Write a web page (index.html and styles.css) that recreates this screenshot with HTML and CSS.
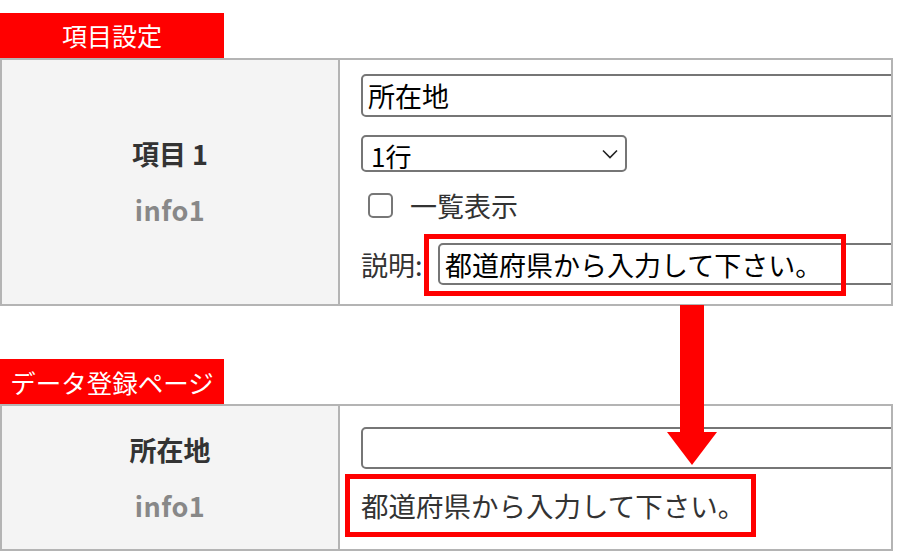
FILE: index.html
```html
<!DOCTYPE html>
<html lang="ja">
<head>
    <meta charset="UTF-8"/>
    <meta name="viewport" content="width=device-width, initial-scale=1"/>
    <title>項目設定とデータ登録ページ</title>
    <link rel="stylesheet" href="styles.css">
</head>
<body>

<div class="tab">項目設定</div>
<div class="panel">
    <div class="head">
        <p class="head-name">項目 1</p>
        <p class="head-key">info1</p>
    </div>
    <div class="body body-setting">
        <input class="field" type="text" value="所在地">
        <div class="select-wrap">
            <select class="select">
                <option>1行</option>
            </select>
            <svg class="chevron" width="16" height="10" viewBox="0 0 16 10">
                <path d="M1 1.5 L8 8.5 L15 1.5" fill="none" stroke="#222" stroke-width="1.6"/>
            </svg>
        </div>
        <label class="check-row">
            <input class="check" type="checkbox">
            <span>一覧表示</span>
        </label>
        <div class="desc-row">
            <span class="desc-label">説明:</span>
            <input class="field field-desc" type="text" value="都道府県から入力して下さい。">
            <span class="mark mark-setting"></span>
        </div>
    </div>
</div>

<div class="tab tab-second">データ登録ページ</div>
<div class="panel">
    <div class="head">
        <p class="head-name">所在地</p>
        <p class="head-key">info1</p>
    </div>
    <div class="body body-entry">
        <input class="field field-entry" type="text" value="">
        <div class="desc-box">都道府県から入力して下さい。</div>
    </div>
</div>

<!-- 注釈の矢印 -->
<svg class="arrow" width="50" height="160" viewBox="0 0 50 160">
    <rect x="13" y="0" width="24" height="128" fill="#ff0000"/>
    <polygon points="0,127 50,127 25,160" fill="#ff0000"/>
</svg>

</body>
</html>
```

FILE: styles.css
```css
/* RESET BASICO */
* {
    margin: 0;
    padding: 0;
    box-sizing: border-box;
}

body {
    font-family: "Noto Sans CJK JP", "Noto Sans", sans-serif;
    background: #fff;
    color: #333;
    padding-top: 13px;
    position: relative;
    overflow: hidden;
}

.tab {
    width: 224px;
    height: 45px;
    line-height: 45px;
    background: #ff0000;
    color: #fff;
    font-size: 25px;
    text-align: center;
}

.tab-second {
    margin-top: 53px;
    font-size: 25.5px;
}

.panel {
    width: 893px;
    border: 2px solid #b4b4b4;
    display: grid;
    grid-template-columns: 338px 1fr;
}

.head {
    background: #f4f4f4;
    border-right: 2px solid #b4b4b4;
    display: flex;
    flex-direction: column;
    align-items: center;
    justify-content: center;
    font-size: 27px;
    font-weight: 700;
}

.head p {
    line-height: 56px;
}

.head-name {
    color: #333;
}

.head-key {
    color: #888;
    letter-spacing: 0.5px;
}

.body {
    padding-left: 21px;
    overflow: hidden;
}

.body-setting {
    padding-top: 14px;
    padding-bottom: 19px;
}

.body-entry {
    padding-top: 21px;
    padding-bottom: 12px;
}

.field {
    display: block;
    flex: none;
    width: 600px;
    height: 43px;
    border: 2px solid #767676;
    border-radius: 5px;
    padding: 0 5px;
    font-family: inherit;
    font-size: 27px;
    color: #000;
    background: #fff;
    outline: none;
}

.field-desc {
    height: 42px;
}

.field-entry {
    height: 42px;
}

.select-wrap {
    position: relative;
    width: 266px;
    margin-top: 18px;
}

.select {
    display: block;
    width: 266px;
    height: 37px;
    appearance: none;
    border: 2px solid #767676;
    border-radius: 5px;
    background: #fff;
    padding: 0 8px;
    font-family: inherit;
    font-size: 26px;
    color: #000;
}

.chevron {
    position: absolute;
    right: 9px;
    top: 14px;
}

.check-row {
    display: flex;
    align-items: center;
    gap: 17px;
    height: 25px;
    margin-top: 21px;
    padding-left: 7px;
    font-size: 27px;
    color: #333;
}

.check {
    appearance: none;
    width: 25px;
    height: 25px;
    border: 2px solid #777;
    border-radius: 5px;
    background: #fff;
}

.desc-row {
    position: relative;
    display: flex;
    align-items: center;
    margin-top: 25px;
    height: 42px;
}

.desc-label {
    flex: none;
    width: 77px;
    font-size: 27px;
    color: #333;
}

/* marco rojo de anotacion */
.mark {
    position: absolute;
    border: 5px solid #ff0000;
}

.mark-setting {
    left: 63px;
    top: -9px;
    width: 422px;
    height: 62px;
}

.desc-box {
    display: inline-block;
    margin-top: 5px;
    margin-left: -16px;
    height: 63px;
    line-height: 53px;
    border: 5px solid #ff0000;
    padding: 0 6px 0 11px;
    font-size: 27.5px;
    color: #333;
}

.arrow {
    position: absolute;
    left: 667px;
    top: 305px;
}
```
